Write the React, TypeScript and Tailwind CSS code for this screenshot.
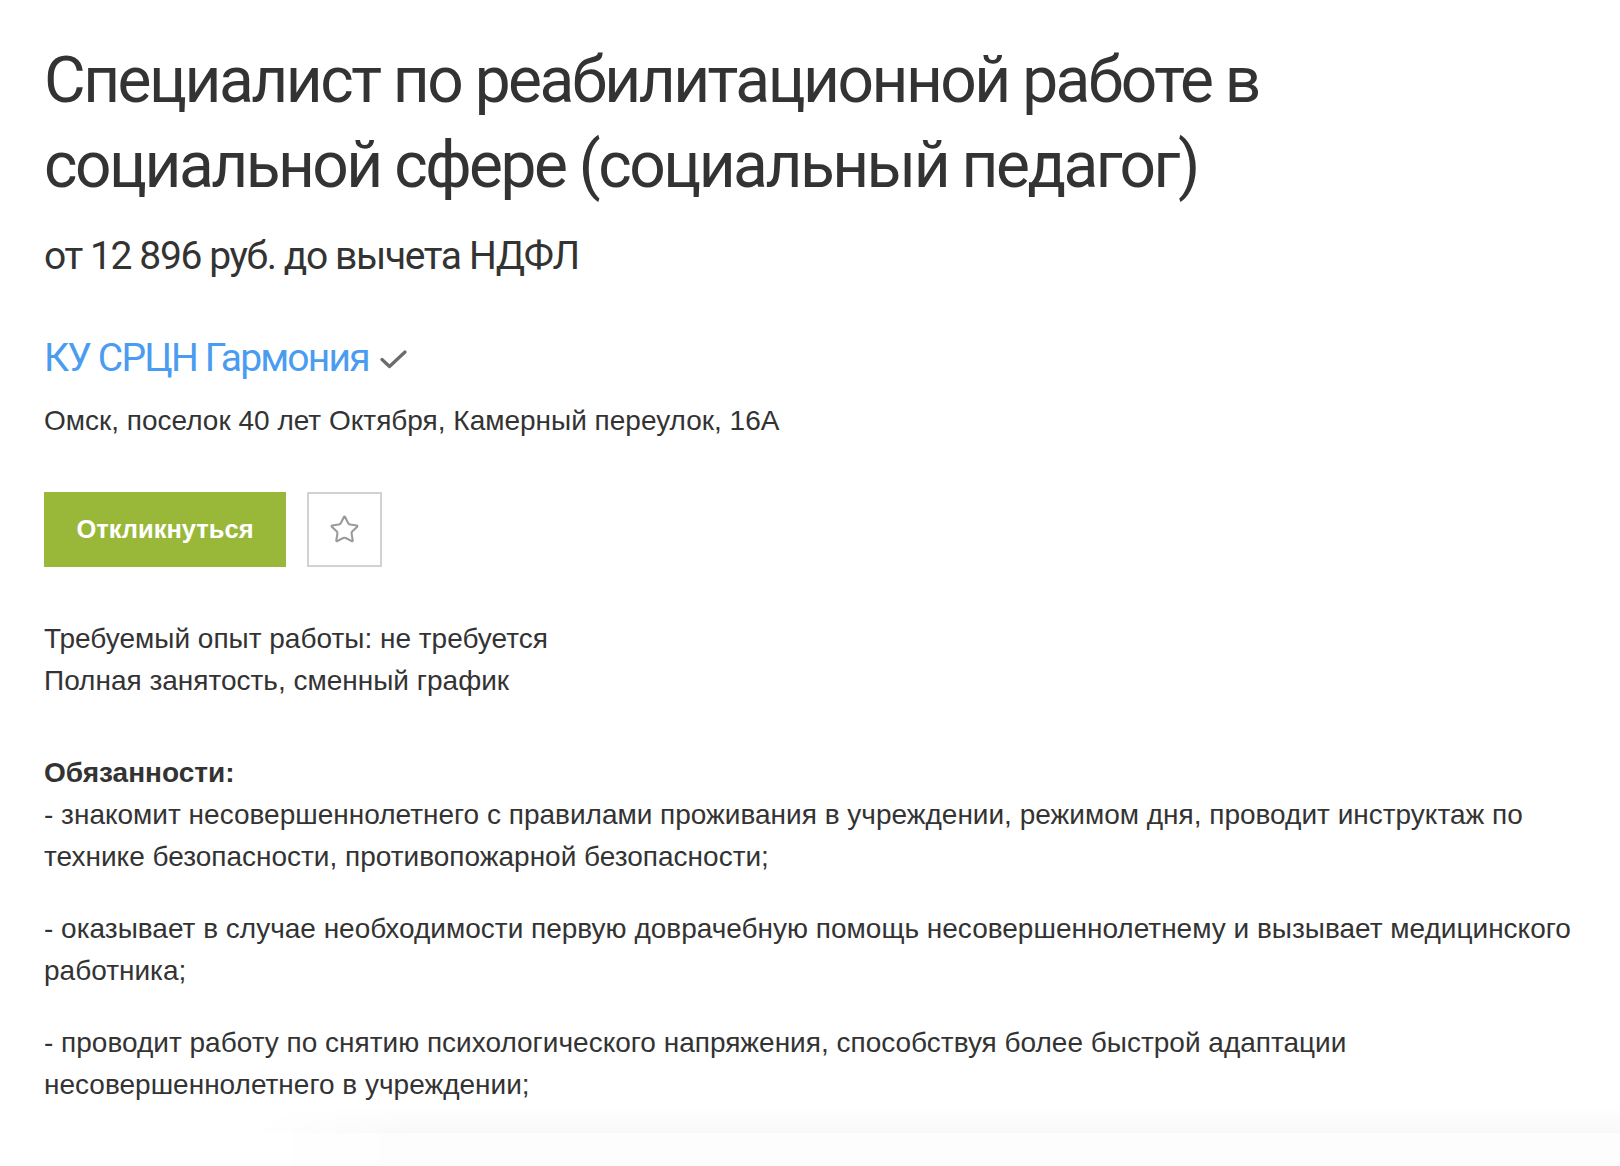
import { Star } from "lucide-react";

const duties = [
  "- знакомит несовершеннолетнего с правилами проживания в учреждении, режимом дня, проводит инструктаж по технике безопасности, противопожарной безопасности;",
  "- оказывает в случае необходимости первую доврачебную помощь несовершеннолетнему и вызывает медицинского работника;",
  "- проводит работу по снятию психологического напряжения, способствуя более быстрой адаптации несовершеннолетнего в учреждении;",
];

function CheckMark() {
  return (
    <svg width="28" height="20" viewBox="0 0 28 20" className="ml-[11px] mt-[15px]">
      <path d="M2 10.5 L9.5 17.5 L25 3" fill="none" stroke="#6b6b6b" strokeWidth="3.2" strokeLinecap="round" strokeLinejoin="round" />
    </svg>
  );
}

export default function App() {
  return (
    <div className="relative min-h-[1166px] bg-white overflow-hidden">
      <div className="w-[1610px] pl-[44px] pt-[38px] text-[#333333]">
        <h1 className="max-w-[1506px] font-['Roboto',sans-serif] text-[64px] leading-[85px] font-normal tracking-[-2.5px] text-[#333333]">
          Специалист по реабилитационной работе в социальной сфере (социальный педагог)
        </h1>

        <p className="mt-[24px] font-['Roboto',sans-serif] text-[39px] leading-[48px] tracking-[-1.4px]">
          от 12 896 руб. до вычета НДФЛ
        </p>

        <div className="mt-[54px] flex items-start">
          <a className="font-['Roboto',sans-serif] text-[39px] leading-[48px] tracking-[-1.8px] text-[#4a9cf0]">
            КУ СРЦН Гармония
          </a>
          <CheckMark />
        </div>

        <p className="mt-[19px] font-['Liberation_Sans',Arial,sans-serif] text-[28px] leading-[40px]">
          Омск, поселок 40 лет Октября, Камерный переулок, 16А
        </p>

        <div className="mt-[51px] flex gap-[21px]">
          <button className="h-[75px] w-[242px] bg-[#99b83a] font-['Liberation_Sans',Arial,sans-serif] text-[25.5px] font-bold text-white">
            Откликнуться
          </button>
          <button className="flex h-[75px] w-[75px] items-center justify-center border-2 border-[#d0d3d6] bg-white">
            <Star size={31} strokeWidth={1.6} className="text-[#9a9a9a]" />
          </button>
        </div>

        <div className="mt-[51px] font-['Liberation_Sans',Arial,sans-serif] text-[28px] leading-[42px]">
          <p>Требуемый опыт работы: не требуется</p>
          <p>Полная занятость, сменный график</p>
        </div>

        <div className="mt-[50px] font-['Liberation_Sans',Arial,sans-serif] text-[28px] leading-[42px]">
          <p className="font-bold">Обязанности:</p>
          {duties.map((d, i) => (
            <p key={i} className={i > 0 ? "mt-[30px]" : ""}>
              {d}
            </p>
          ))}
        </div>
      </div>

      {/* bottom sticky panel shadow */}
      <div className="absolute left-0 right-0 top-[1107px] h-[59px] [mask-image:linear-gradient(to_right,transparent_250px,black_420px)]">
        <div className="h-[26px] bg-gradient-to-b from-white to-[#f8f8f8]" />
        <div className="h-[33px] bg-[#fdfdfd]" />
      </div>
    </div>
  );
}
